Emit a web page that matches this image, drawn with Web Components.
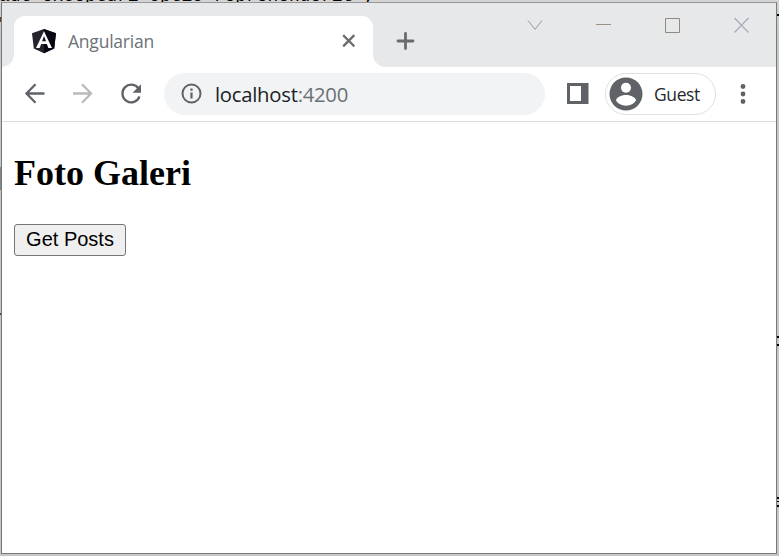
<!DOCTYPE html>
<html lang="en"><head><meta charset="utf-8"><title>Angularian</title>
<style>html,body{margin:0;width:779px;height:556px;overflow:hidden;background:#c9c9c9}</style></head>
<body>
<desk-top>
  <browser-window>
    <tab-strip slot="tabs"><browser-tab>Angularian</browser-tab></tab-strip>
    <tool-bar slot="tools"><address-box><span>localhost</span><span style="color:#6b7075">:4200</span></address-box><profile-chip slot="profile">Guest</profile-chip></tool-bar>
    <photo-gallery></photo-gallery>
  </browser-window>
</desk-top>
<script>
const define=(name,html)=>customElements.define(name,class extends HTMLElement{
  constructor(){super();this.attachShadow({mode:'open'}).innerHTML=html;}
});

define('desk-top',`<style>
:host{display:block;position:relative;width:779px;height:556px;overflow:hidden;background:linear-gradient(#d4d4d4,#c6c6c6 30px)}
.behind{position:absolute;left:-1px;top:-14px;font:17.9px/20px "Liberation Mono",monospace;color:#000;white-space:pre}
.mark{position:absolute;background:#000}
</style>
<div class="behind">aut excepturi optio reprehenderit ,</div>
<i class="mark" style="left:777px;top:14px;width:2px;height:2px"></i>
<i class="mark" style="left:776px;top:336px;width:3px;height:2px"></i>
<i class="mark" style="left:776px;top:344px;width:3px;height:2px"></i>
<i class="mark" style="left:776px;top:497px;width:3px;height:2px"></i>
<i class="mark" style="left:777px;top:501px;width:2px;height:1px"></i>
<i class="mark" style="left:776px;top:505px;width:3px;height:2px"></i>
<i class="mark" style="left:0;top:17px;width:1px;height:5px;background:#5e3c28"></i>
<i class="mark" style="left:0;top:167px;width:1px;height:23px;background:#858585"></i>
<i class="mark" style="left:0;top:313px;width:1px;height:2px;background:#5e3c28"></i>
<slot></slot>`);

define('browser-window',`<style>
:host{position:absolute;left:1px;top:2px;width:776px;height:552px;box-sizing:border-box;border:1px solid #77787a;border-top-color:#97989a;background:#fff;display:flex;flex-direction:column}
</style><slot name="tabs"></slot><slot name="tools"></slot><slot></slot>`);

define('tab-strip',`<style>
:host{display:flex;height:64px;background:#e7e8ea;align-items:flex-end;font-family:"Open Sans",sans-serif}
.plus{width:20px;height:20px;margin:0 0 16px 22px}
.controls{display:flex;margin:0 26px 34px auto;gap:52px}
svg{display:block}
</style><slot></slot>
<svg class="plus" viewBox="0 0 20 20"><path d="M10.5 2.5v15M3 10h15" stroke="#696b6e" stroke-width="2.8" stroke-linecap="round"/></svg>
<div class="controls">
<svg width="17" height="17" fill="none" stroke="#97989a"><path d="M2 4.5l7 8.800 7-8.800"/></svg>
<svg width="17" height="17"><path d="M1 8.5h15" stroke="#9a8f84"/></svg>
<svg width="17" height="17"><path d="M1.5 2.5h14v14h-14z" fill="none" stroke="#94897e"/></svg>
<svg width="17" height="17"><path d="M1.500 2l14 14.500M15.500 2L1.500 16.500" stroke="#a9aabb" stroke-width="1.2"/></svg>
</div>`);

define('browser-tab',`<style>
:host{display:flex;align-items:center;position:relative;box-sizing:border-box;width:359px;height:51px;margin-left:12px;background:#fff;border-radius:11px 11px 0 0;padding:0 17px 2px 17px;color:#6b7277;font-size:17.5px;letter-spacing:-.22px}
:host::before,:host::after{content:"";position:absolute;bottom:0;width:12px;height:12px}
:host::before{left:-12px;background:radial-gradient(circle at 0 0,transparent 11.500px,#fff 12px)}
:host::after{right:-12px;background:radial-gradient(circle at 100% 0,transparent 11.500px,#fff 12px)}
.logo{width:26px;height:26px;margin-right:11px}
.close{margin-left:auto;width:15px;height:15px}
</style>
<svg class="logo" viewBox="0 0 26 26"><path fill="#25242d" d="M13 1l12 4.200-1.800 15.300L13 25.200 2.800 20.500 1 5.200z"/><path fill="#090713" d="M13 1l12 4.200-1.800 15.300L13 25.200z"/><path fill="#fff" fill-rule="evenodd" d="M13 3.200L5 20h3.600l1.600-4h5.600l1.600 4H21zM13 8l2 5.200h-4z"/></svg>
<span><slot></slot></span>
<svg class="close" viewBox="0 0 15 15"><path d="M3 3l9.500 9.500M12.500 3L3 12.500" stroke="#696b6e" stroke-width="2.300" stroke-linecap="square"/></svg>`);

define('tool-bar',`<style>
:host{display:flex;align-items:center;box-sizing:border-box;height:55px;padding-bottom:1px;border-bottom:1px solid #dcddde;background:#fff;font-family:"Open Sans",sans-serif}
svg{display:block;flex:none}
.nav{display:flex;gap:24px;margin:0 21px 0 21px}
.panel{margin:0 16px 0 22px}
.menu{margin-left:22px}
</style>
<div class="nav">
<svg width="24" height="24" fill="none" stroke="#5f6368" stroke-width="2.300"><path d="M21.500 11.500H3.500M12.500 2.300l-9 9.200 9 9.200"/></svg>
<svg width="24" height="24" fill="none" stroke="#b9babb" stroke-width="2.300"><path d="M2 11.500h18M11 2.300l9 9.200-9 9.200"/></svg>
<svg width="24" height="24"><path d="M19.500 6.500A8.800 8.800 0 1 0 20.500 14.500" fill="none" stroke="#5f6368" stroke-width="2.300"/><path d="M22 2.300v8.400h-8.400z" fill="#5f6368"/></svg>
</div><slot></slot>
<svg class="panel" width="22" height="21"><path fill="#5f6368" fill-rule="evenodd" d="M0 0h21.500v21H0zM3 3v15h11V3z"/></svg>
<slot name="profile"></slot>
<svg class="menu" width="10" height="22" fill="#5f6368"><circle cx="5" cy="3.500" r="2.400"/><circle cx="5" cy="11" r="2.400"/><circle cx="5" cy="18.500" r="2.400"/></svg>`);

define('address-box',`<style>
:host{display:flex;align-items:center;box-sizing:border-box;width:381px;height:42px;border-radius:21px;background:#f1f3f4;padding-left:17px;color:#202124;font-size:20.300px;letter-spacing:-.26px;white-space:nowrap}
svg{margin-right:13px}
</style><svg width="21" height="21"><circle cx="10.500" cy="10.500" r="9" fill="none" stroke="#5f6368" stroke-width="2"/><path d="M10.500 9.500v6M10.500 5.500v2.200" stroke="#5f6368" stroke-width="2.200"/></svg><slot></slot>`);

define('profile-chip',`<style>
:host{display:flex;align-items:center;box-sizing:border-box;width:111px;height:42px;border:1px solid #dfe0e2;border-radius:21px;padding-left:3px;color:#27282c;font-size:17.500px;letter-spacing:-.4px}
svg{margin-right:11px;flex:none}
</style><svg width="34" height="34" viewBox="0 0 34 34"><circle cx="17" cy="17" r="16.500" fill="#5f6368"/><circle cx="17" cy="10.800" r="5" fill="#fff"/><path d="M7 23.500c0-3 5-5.500 10-5.500s10 2.500 10 5.500c-2 3.200-5.500 5.200-10 5.200S9 26.700 7 23.500z" fill="#fff"/></svg><slot></slot>`);

define('photo-gallery',`<style>
:host{display:flex;flex-direction:column;align-items:flex-start;padding:31px 12px 0}
h2{margin:0;font:bold 36px/41px "Liberation Serif",serif;color:#000}
button{margin:30px 0 0;box-sizing:border-box;width:112px;height:32px;border:1px solid #767676;border-radius:3px;background:#efefef;padding:0 0 2px;font:20px/28px "Liberation Sans",sans-serif;color:#000}
</style><h2>Foto Galeri</h2><button>Get Posts</button>`);
</script>
</body></html>
